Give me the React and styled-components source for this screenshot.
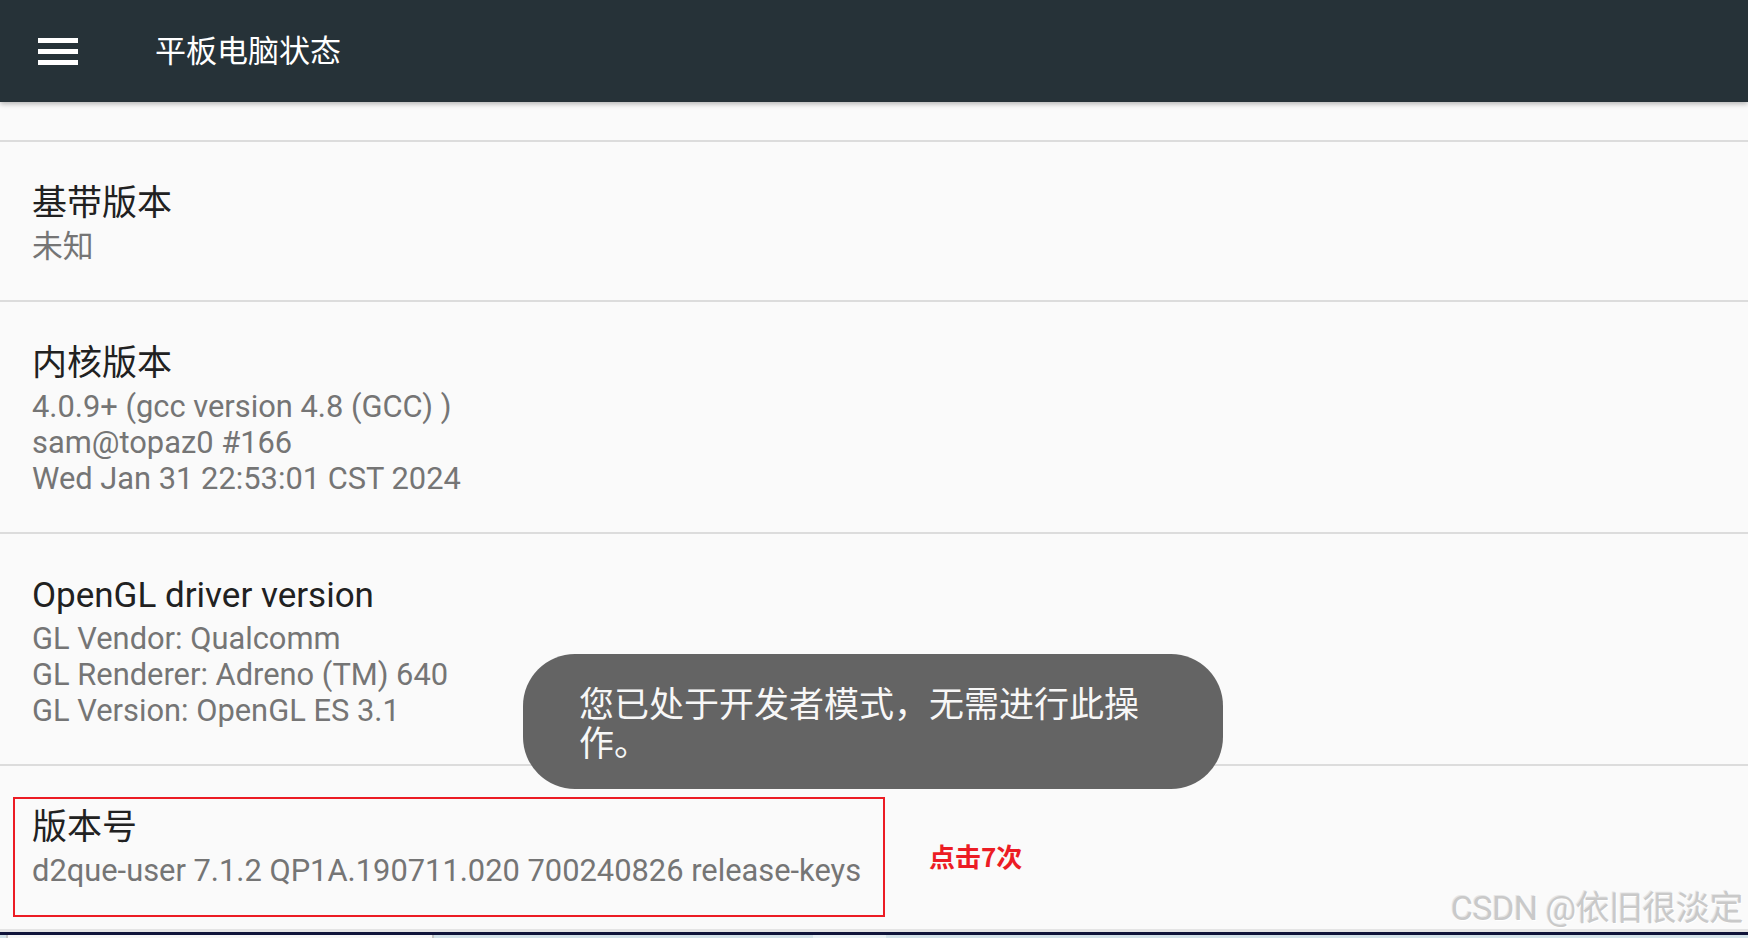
import React from "react";
import styled, { createGlobalStyle } from "styled-components";

const GlobalStyle = createGlobalStyle`
  html, body { margin: 0; padding: 0; background: #fafafa; }
  body { font-family: Roboto, "Noto Sans CJK SC", sans-serif; }
  * { box-sizing: border-box; }
`;

const Screen = styled.div`
  position: relative;
  width: 1748px;
  height: 938px;
  overflow: hidden;
  display: flex;
  flex-direction: column;
  background: #fafafa;
`;

const AppBar = styled.header`
  position: relative;
  z-index: 2;
  flex: 0 0 102px;
  display: flex;
  align-items: center;
  padding-left: 38px;
  background: #263238;
  box-shadow: 0 2px 5px rgba(0, 0, 0, 0.28);
`;

const MenuButton = styled.div`
  width: 40px;
  height: 27px;
  display: flex;
  flex-direction: column;
  justify-content: space-between;
`;

const MenuBar = styled.span`
  display: block;
  height: 5px;
  background: #ffffff;
`;

const AppTitle = styled.h1`
  margin: 0 0 4px 77px;
  font-family: "Noto Sans CJK SC", Roboto, sans-serif;
  font-weight: 400;
  font-size: 31px;
  line-height: 40px;
  color: #ffffff;
`;

const List = styled.main`
  flex: 1 1 auto;
  overflow: hidden;
  display: flex;
  flex-direction: column;
`;

const TopGap = styled.div`
  flex: 0 0 38px;
`;

const Item = styled.section`
  position: relative;
  flex: 0 0 auto;
  border-top: 2px solid #dcdcdc;
  padding: 41px 32px 35px;
  display: flex;
  flex-direction: column;
  gap: 4px;
`;

const ItemTitle = styled.div`
  font-family: Roboto, "Noto Sans CJK SC", sans-serif;
  font-size: 35px;
  line-height: 42px;
  color: #212121;
`;

const ItemSummary = styled.div`
  font-family: Roboto, "Noto Sans CJK SC", sans-serif;
  font-size: 30.85px;
  line-height: 36px;
  color: #757575;
  white-space: pre-line;
`;

const Highlight = styled.div`
  position: absolute;
  left: 13px;
  top: 31px;
  width: 872px;
  height: 120px;
  border: 2px solid #ec1c24;
  pointer-events: none;
`;

const ClickNote = styled.div`
  position: absolute;
  left: 929px;
  top: 74px;
  font-family: "Noto Sans CJK SC", Roboto, sans-serif;
  font-weight: 700;
  font-size: 26px;
  line-height: 32px;
  color: #ec1c24;
`;

const Toast = styled.div`
  position: absolute;
  z-index: 3;
  left: 523px;
  top: 654px;
  width: 700px;
  height: 135px;
  padding: 28px 56px;
  border-radius: 52px;
  background: #646464;
  font-family: "Noto Sans CJK SC", Roboto, sans-serif;
  font-size: 35px;
  line-height: 39px;
  color: #f7f7f7;
`;

const Watermark = styled.div`
  position: absolute;
  z-index: 4;
  right: 5px;
  bottom: 11px;
  font-family: Roboto, "Noto Sans CJK SC", sans-serif;
  font-size: 34px;
  line-height: 38px;
  color: #c9c9c9;
  text-shadow: 1px 1px 0 #ffffff, -1px -1px 0 #e6e6e6;
  letter-spacing: -0.5px;
`;

const BottomStrip = styled.footer`
  flex: 0 0 9px;
  display: flex;
  flex-direction: column;
`;

const StripGrey = styled.div`
  height: 3px;
  background: #e4e4e4;
`;

const StripNavy = styled.div`
  height: 3px;
  background: #10143a;
`;

const StripTaskbar = styled.div`
  height: 3px;
  display: flex;
  background: #d3e2e9;
`;

const TaskSlot = styled.div`
  margin-left: ${(p) => p.$left}px;
  width: ${(p) => p.$width}px;
  background: ${(p) => p.$bg};
  border-left: ${(p) => (p.$bordered ? "2px solid #c6c6c6" : "none")};
  border-right: ${(p) => (p.$bordered ? "2px solid #c6c6c6" : "none")};
`;

const items = [
  { title: "基带版本", summary: "未知" },
  {
    title: "内核版本",
    summary: "4.0.9+ (gcc version 4.8 (GCC) )\nsam@topaz0 #166\nWed Jan 31 22:53:01 CST 2024",
  },
  {
    title: "OpenGL driver version",
    summary: "GL Vendor: Qualcomm\nGL Renderer: Adreno (TM) 640\nGL Version: OpenGL ES 3.1",
  },
];

export default function App() {
  return (
    <>
      <GlobalStyle />
      <Screen>
        <AppBar>
          <MenuButton>
            <MenuBar />
            <MenuBar />
            <MenuBar />
          </MenuButton>
          <AppTitle>平板电脑状态</AppTitle>
        </AppBar>
        <List>
          <TopGap />
          {items.map((it) => (
            <Item key={it.title}>
              <ItemTitle>{it.title}</ItemTitle>
              <ItemSummary>{it.summary}</ItemSummary>
            </Item>
          ))}
          <Item>
            <ItemTitle>版本号</ItemTitle>
            <ItemSummary>d2que-user 7.1.2 QP1A.190711.020 700240826 release-keys</ItemSummary>
            <Highlight />
            <ClickNote>点击7次</ClickNote>
          </Item>
        </List>
        <BottomStrip>
          <StripGrey />
          <StripNavy />
          <StripTaskbar>
            <TaskSlot $left={6} $width={428} $bg="#f7f7f7" $bordered />
            <TaskSlot $left={379} $width={73} $bg="#e8f0f4" />
          </StripTaskbar>
        </BottomStrip>
        <Toast>您已处于开发者模式，无需进行此操作。</Toast>
        <Watermark>CSDN @依旧很淡定</Watermark>
      </Screen>
    </>
  );
}
